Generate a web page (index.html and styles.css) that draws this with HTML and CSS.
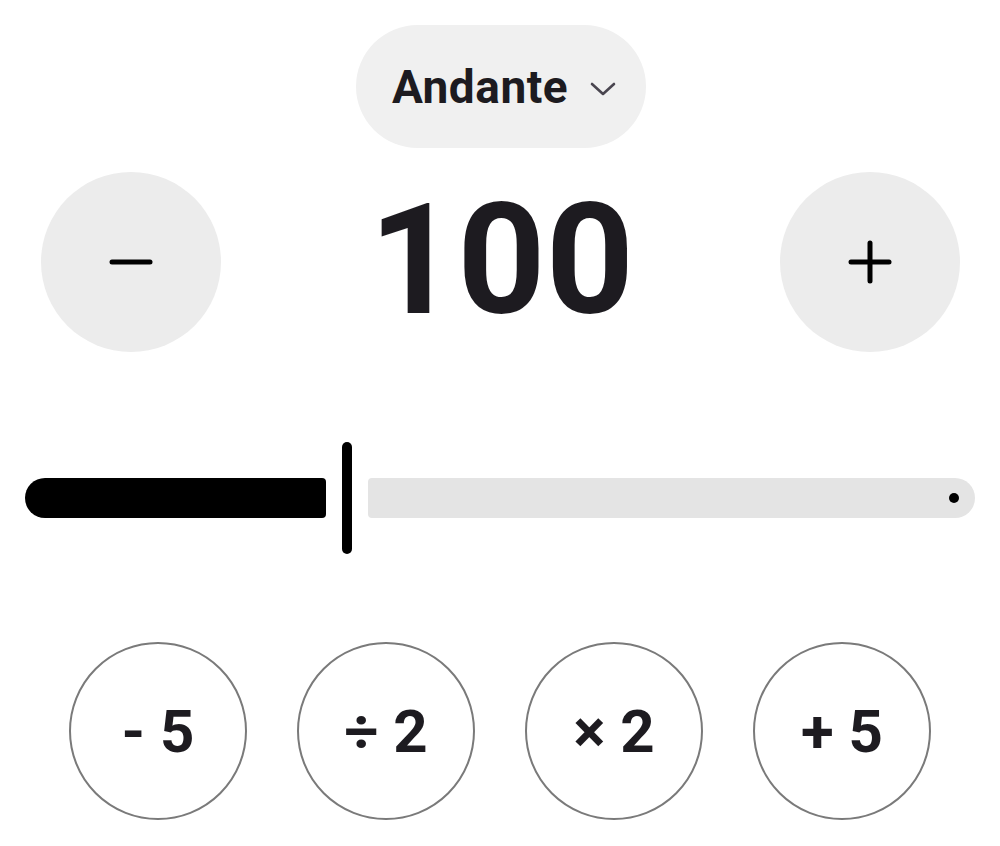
FILE: index.html
```html
<!DOCTYPE html>
<html lang="en">
  <head>
    <meta charset="UTF-8" />
    <meta name="viewport" content="width=device-width, initial-scale=1.0" />
    <title>Metronome</title>
    <link rel="stylesheet" href="styles.css">
  </head>

  <body>
    <div class="app">
      <div class="top">
        <button class="tempo-name">
          <span>Andante</span>
          <svg class="chevron" width="26" height="14" viewBox="0 0 26 14">
            <polyline points="2,2 13,12 24,2" fill="none" stroke="#49454f" stroke-width="2.6" stroke-linecap="round" stroke-linejoin="round" />
          </svg>
        </button>
      </div>

      <div class="bpm-row">
        <button class="round-btn">
          <svg width="44" height="44" viewBox="0 0 44 44">
            <line x1="3" y1="22" x2="41" y2="22" stroke="#000" stroke-width="5" stroke-linecap="round" />
          </svg>
        </button>
        <div class="bpm">100</div>
        <button class="round-btn">
          <svg width="44" height="44" viewBox="0 0 44 44">
            <line x1="3" y1="22" x2="41" y2="22" stroke="#000" stroke-width="5" stroke-linecap="round" />
            <line x1="22" y1="3" x2="22" y2="41" stroke="#000" stroke-width="5" stroke-linecap="round" />
          </svg>
        </button>
      </div>

      <div class="slider">
        <div class="track-active"></div>
        <div class="thumb"></div>
        <div class="track-rest">
          <span class="stop-dot"></span>
        </div>
      </div>

      <div class="quick">
        <button class="quick-btn">- 5</button>
        <button class="quick-btn">÷ 2</button>
        <button class="quick-btn">× 2</button>
        <button class="quick-btn">+ 5</button>
      </div>
    </div>
  </body>
</html>
```

FILE: styles.css
```css
body {
  margin: 0;
  background: #fff;
  font-family: Roboto, "Liberation Sans", sans-serif;
  color: #1d1b20;
}

button {
  font-family: inherit;
  color: inherit;
  border: none;
  padding: 0;
  cursor: pointer;
}

.app {
  width: 1000px;
  padding-top: 25px;
}

.top {
  display: flex;
  justify-content: center;
}

.tempo-name {
  display: inline-flex;
  align-items: center;
  gap: 22px;
  height: 123px;
  padding: 0 30px 0 36px;
  margin-left: 2px;
  border-radius: 62px;
  background: #f0f0f0;
  font-size: 46px;
  font-weight: 700;
  letter-spacing: 0.5px;
}

.chevron {
  margin-top: 4px;
}

.bpm-row {
  display: flex;
  align-items: center;
  justify-content: space-between;
  padding: 0 40px 0 41px;
  margin-top: 24px;
}

.round-btn {
  width: 180px;
  height: 180px;
  border-radius: 50%;
  background: #ececec;
  display: flex;
  align-items: center;
  justify-content: center;
}

.round-btn svg {
  display: block;
}

.bpm {
  font-size: 154px;
  font-weight: 700;
  line-height: 1;
  margin-top: -2px;
  margin-left: 2px;
}

.slider {
  display: flex;
  align-items: center;
  height: 112px;
  padding: 0 25px;
  margin-top: 90px;
}

.track-active {
  width: 301px;
  height: 40px;
  background: #000;
  border-radius: 20px 4px 4px 20px;
}

.thumb {
  width: 10px;
  height: 112px;
  margin: 0 16px;
  background: #000;
  border-radius: 5px;
}

.track-rest {
  flex: 1;
  height: 40px;
  background: #e4e4e4;
  border-radius: 4px 20px 20px 4px;
  display: flex;
  align-items: center;
  justify-content: flex-end;
  padding-right: 16px;
}

.stop-dot {
  width: 10px;
  height: 10px;
  border-radius: 50%;
  background: #000;
}

.quick {
  display: flex;
  justify-content: center;
  gap: 50px;
  margin-top: 88px;
}

.quick-btn {
  width: 178px;
  height: 178px;
  border-radius: 50%;
  background: #fff;
  border: 2px solid #7a7a7a;
  font-size: 60px;
  font-weight: 700;
  display: flex;
  align-items: center;
  justify-content: center;
}
```
